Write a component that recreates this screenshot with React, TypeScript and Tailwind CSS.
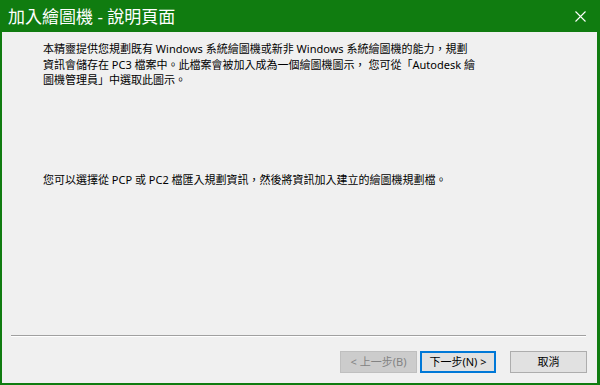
import React from "react";

const font = { fontFamily: '"Noto Sans", "Noto Sans CJK TC", sans-serif' };

function CloseIcon() {
  return (
    <svg width="11" height="11" viewBox="0 0 11 11" className="block">
      <path d="M0.5 0.5 L10.5 10.5 M10.5 0.5 L0.5 10.5" stroke="#ffffff" strokeWidth="1.1" fill="none" />
    </svg>
  );
}

export default function App() {
  return (
    <div className="flex h-[385px] w-[600px] flex-col overflow-hidden bg-[#107c10]" style={font}>
      {/* title bar */}
      <div className="flex h-[32px] shrink-0 items-center justify-between pl-[8px] pr-[14px] text-white">
        <span className="text-[17px] leading-none">加入繪圖機 - 說明頁面</span>
        <CloseIcon />
      </div>

      {/* body */}
      <div className="ml-[2px] mr-[3px] mb-[2px] flex flex-1 flex-col bg-[#f0f0f0] text-[11px] leading-[15.5px] text-black">
        <div className="pl-[41px] pt-[9px]">
          <p>
            本精靈提供您規劃既有 Windows 系統繪圖機或新非 Windows 系統繪圖機的能力，規劃
            <br />
            資訊會儲存在 PC3 檔案中。此檔案會被加入成為一個繪圖機圖示， 您可從「Autodesk 繪
            <br />
            圖機管理員」中選取此圖示。
          </p>
          <p className="mt-[84px]">您可以選擇從 PCP 或 PC2 檔匯入規劃資訊，然後將資訊加入建立的繪圖機規劃檔。</p>
        </div>

        <div className="flex-1" />

        <div className="ml-[9px] mr-[11px] border-t border-b border-t-[#a0a0a0] border-b-white" />

        <div className="mt-[14px] mb-[10px] mr-[10px] flex justify-end">
          <button
            disabled
            className="h-[22px] w-[77px] border border-[#bfbfbf] bg-[#cccccc] text-[11px] text-[#838383]"
          >
            &lt; 上一步(B)
          </button>
          <button className="ml-[3px] h-[22px] w-[76px] border-2 border-[#0078d7] bg-[#e1e1e1] text-[11px] text-black">
            下一步(N) &gt;
          </button>
          <button className="ml-[14px] h-[22px] w-[77px] border border-[#adadad] bg-[#e1e1e1] text-[11px] text-black">
            取消
          </button>
        </div>
      </div>
    </div>
  );
}
